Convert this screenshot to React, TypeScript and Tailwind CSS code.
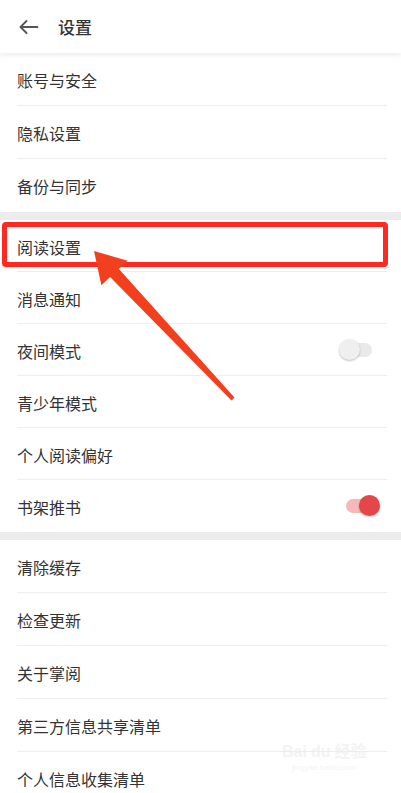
import React from 'react'

type Item = {
  label: string
  toggle?: 'on' | 'off'
}

const groups: { items: Item[]; rowH: string }[] = [
  {
    rowH: 'h-[53px]',
    items: [{ label: '账号与安全' }, { label: '隐私设置' }, { label: '备份与同步' }],
  },
  {
    rowH: 'h-[52px]',
    items: [
      { label: '阅读设置' },
      { label: '消息通知' },
      { label: '夜间模式', toggle: 'off' },
      { label: '青少年模式' },
      { label: '个人阅读偏好' },
      { label: '书架推书', toggle: 'on' },
    ],
  },
  {
    rowH: 'h-[53px]',
    items: [
      { label: '清除缓存' },
      { label: '检查更新' },
      { label: '关于掌阅' },
      { label: '第三方信息共享清单' },
      { label: '个人信息收集清单' },
    ],
  },
]

const Toggle = ({ on }: { on: boolean }) => (
  <div className="relative w-[42px] h-[22px] mr-[5px] flex items-center">
    <div
      className={
        on
          ? 'ml-[7px] w-[27px] h-[14px] rounded-full bg-[#f5b9b7]'
          : 'ml-[6px] w-[27px] h-[14px] rounded-full bg-[#e9e9e9]'
      }
    />
    <div
      className={
        on
          ? 'absolute left-[20px] top-[0px] w-[21px] h-[21px] rounded-full bg-[#e4474a] shadow-[0_1px_2px_rgba(0,0,0,0.25)]'
          : 'absolute left-[0px] top-[0px] w-[21px] h-[21px] rounded-full bg-[#efefef] shadow-[0_1px_2px_rgba(0,0,0,0.25)]'
      }
    />
  </div>
)

const Row = ({ item, h, last }: { item: Item; h: string; last: boolean }) => (
  <div className={`${h} relative flex items-center pl-[17px] pr-[15px] bg-white`}>
    <span className="flex-1 text-[16px] text-[#333] pt-[1px]">{item.label}</span>
    {item.toggle && <Toggle on={item.toggle === 'on'} />}
    {!last && (
      <div className="absolute left-[17px] right-[14px] bottom-0 h-px bg-[#eeeeee]" />
    )}
  </div>
)

export default function App() {
  return (
    <div
      className="relative w-[401px] h-[793px] overflow-hidden bg-white"
      style={{ fontFamily: '"Noto Sans CJK SC", "Noto Sans", sans-serif' }}
    >
      <div className="relative z-10 h-[53px] flex items-center bg-white shadow-[0_2px_5px_rgba(0,0,0,0.08)]">
        <svg width="20" height="14" viewBox="0 0 20 14" className="ml-[19px]">
          <path
            d="M1.5 7H18.5M7.5 1L1.5 7L7.5 13"
            fill="none"
            stroke="#555"
            strokeWidth="1.8"
            strokeLinecap="round"
            strokeLinejoin="round"
          />
        </svg>
        <span className="ml-[19px] text-[17px] font-medium text-[#333]">设置</span>
      </div>

      {groups.map((g, gi) => (
        <div key={gi}>
          {gi > 0 && <div className="h-[8px] bg-[#ececec]" />}
          {g.items.map((item, i) => (
            <Row key={item.label} item={item} h={g.rowH} last={i === g.items.length - 1} />
          ))}
        </div>
      ))}

      {/* red highlight box */}
      <div className="absolute left-[2px] top-[222px] w-[386px] h-[45px] border-[5px] border-[#fe2a22] rounded-[4px]" />

      {/* arrow */}
      <svg className="absolute left-0 top-0" width="401" height="793" viewBox="0 0 401 793">
        <polygon
          points="94,251 127.6,260.7 118.9,268.9 234.5,397.6 231.5,400.4 110.1,277.1 101.4,285.3"
          fill="#f2401f"
        />
      </svg>

      {/* watermark */}
      <div className="absolute left-[282px] top-[744px] flex flex-col items-center opacity-60">
        <span
          className="text-[16px] font-bold text-[#ececec] leading-none"
          style={{ fontFamily: '"Liberation Sans", "Noto Sans CJK SC", sans-serif' }}
        >
          Bai<span className="mx-[4px]">du</span>经验
        </span>
        <span
          className="mt-[4px] text-[8px] text-[#ececec] leading-none"
          style={{ fontFamily: '"Liberation Sans", sans-serif' }}
        >
          jingyan.baidu.com
        </span>
      </div>
    </div>
  )
}
